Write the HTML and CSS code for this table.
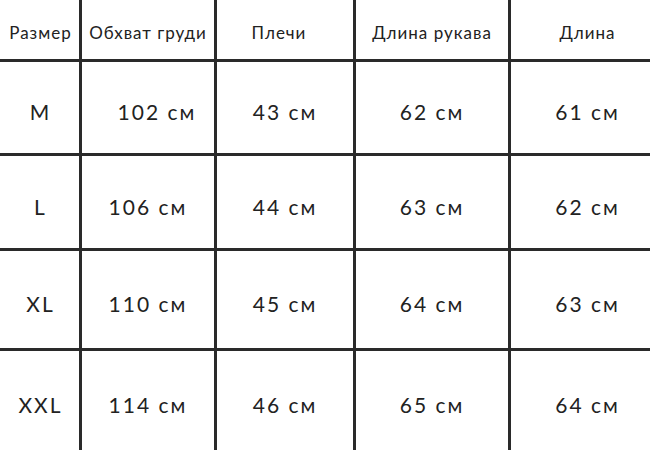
FILE: index.html
```html
<!DOCTYPE html>
<html lang="ru">
<head>
<meta charset="utf-8">
<link rel="stylesheet" href="styles.css">
<title>Размеры</title>
</head>
<body>
<div class="chart">
  <div class="cell head c1">Размер</div>
  <div class="cell head c2">Обхват груди</div>
  <div class="cell head c3 shoulders">Плечи</div>
  <div class="cell head c4">Длина рукава</div>
  <div class="cell head c5">Длина</div>

  <div class="cell c1">M</div>
  <div class="cell c2 nudge">102 см</div>
  <div class="cell c3">43 см</div>
  <div class="cell c4">62 см</div>
  <div class="cell c5">61 см</div>

  <div class="cell c1">L</div>
  <div class="cell c2">106 см</div>
  <div class="cell c3">44 см</div>
  <div class="cell c4">63 см</div>
  <div class="cell c5">62 см</div>

  <div class="cell c1">XL</div>
  <div class="cell c2">110 см</div>
  <div class="cell c3">45 см</div>
  <div class="cell c4">64 см</div>
  <div class="cell c5">63 см</div>

  <div class="cell c1">XXL</div>
  <div class="cell c2">114 см</div>
  <div class="cell c3">46 см</div>
  <div class="cell c4">65 см</div>
  <div class="cell c5">64 см</div>
</div>
</body>
</html>
```
FILE: styles.css
```css
html, body {
  margin: 0;
  padding: 0;
  background: #ffffff;
}
.chart {
  width: 650px;
  height: 450px;
  display: grid;
  grid-template-columns: 79px 132px 136px 152px 139px;
  grid-template-rows: 59px 91px 92px 97px 99px;
  gap: 3px;
  background: #2a2a2a;
  font-family: Lato, "DejaVu Sans", sans-serif;
  color: #222222;
}
.cell {
  background: #ffffff;
  display: flex;
  align-items: center;
  justify-content: center;
  font-size: 21px;
  letter-spacing: 2px;
  padding-top: 8px;
  box-sizing: border-box;
  white-space: nowrap;
}
.head {
  font-size: 17px;
  letter-spacing: 1px;
  padding-top: 6px;
}
.c1 {
  padding-left: 2px;
}
.c5 {
  padding-left: 14px;
}
.nudge {
  padding-left: 18px;
}
.shoulders {
  padding-right: 12px;
}
```
